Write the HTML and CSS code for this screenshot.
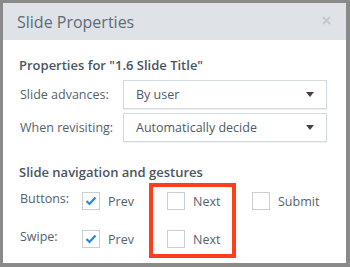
FILE: index.html
```html
<!DOCTYPE html>
<html>
<head>
<meta charset="utf-8">
<link rel="stylesheet" href="styles.css">
</head>
<body>
<div class="dialog">
  <div class="header">
    <span class="title">Slide Properties</span>
    <svg class="close" width="9" height="9" viewBox="0 0 9 9"><path d="M1 1L8 8M8 1L1 8" stroke="#c5c9cd" stroke-width="2"/></svg>
  </div>
  <div class="body">
    <div class="heading">Properties for "1.6 Slide Title"</div>
    <div class="form">
      <span class="label">Slide advances:</span>
      <div class="select"><span>By user</span><span class="arrow"></span></div>
      <span class="label">When revisiting:</span>
      <div class="select"><span>Automatically decide</span><span class="arrow"></span></div>
    </div>
    <div class="heading heading2">Slide navigation and gestures</div>
    <div class="nav">
      <span class="label">Buttons:</span>
      <label class="opt"><span class="box checked"><svg width="12" height="10" viewBox="0 0 12 10"><path d="M1.5 5L4.5 8L10.5 1.5" fill="none" stroke="#2a8ad6" stroke-width="2.2"/></svg></span>Prev</label>
      <label class="opt"><span class="box"></span>Next</label>
      <label class="opt"><span class="box"></span>Submit</label>
      <span class="label">Swipe:</span>
      <label class="opt"><span class="box checked"><svg width="12" height="10" viewBox="0 0 12 10"><path d="M1.5 5L4.5 8L10.5 1.5" fill="none" stroke="#2a8ad6" stroke-width="2.2"/></svg></span>Prev</label>
      <label class="opt"><span class="box"></span>Next</label>
      <span></span>
      <div class="highlight"></div>
    </div>
  </div>
</div>
</body>
</html>
```
FILE: styles.css
```css
html, body {
  margin: 0;
  padding: 0;
}
body {
  background: #8a8a8a;
  width: 350px;
  height: 267px;
  overflow: hidden;
  font-family: "Open Sans", "Noto Sans", sans-serif;
  color: #4f5a66;
}
.dialog {
  margin: 3px 4px 0 3px;
  height: 260px;
  background: #fff;
  display: flex;
  flex-direction: column;
}
.header {
  height: 37px;
  background: #dfe3e7;
  display: flex;
  align-items: center;
  justify-content: space-between;
  padding: 0 15px 0 14px;
}
.title {
  font-size: 16px;
  color: #5d6b79;
}
.close {
  margin-top: -2px;
}
.body {
  padding: 0 16px 0 16px;
}
.heading {
  margin-top: 16px;
  font-size: 13px;
  line-height: 18px;
  font-weight: 600;
  color: #4a5562;
}
.heading2 {
  margin-top: 21px;
}
.form {
  margin-top: 6px;
  display: grid;
  grid-template-columns: 104px 204px;
  row-gap: 4px;
  align-items: center;
}
.label {
  font-size: 12.5px;
  color: #56616d;
  padding-left: 1px;
}
.select {
  height: 29px;
  box-sizing: border-box;
  border: 1px solid #d5dadf;
  box-shadow: 0 1px 1px rgba(0,0,0,0.06);
  display: flex;
  align-items: center;
  justify-content: space-between;
  padding: 0 12px 0 12px;
  font-size: 12.5px;
  color: #4f5a66;
}
.arrow {
  width: 0;
  height: 0;
  border-left: 4px solid transparent;
  border-right: 4px solid transparent;
  border-top: 5px solid #444;
}
.nav {
  position: relative;
  margin-top: 11px;
  display: grid;
  grid-template-columns: 63px 85px 85px 85px;
  grid-auto-rows: 18px;
  row-gap: 20px;
  align-items: center;
}
.nav .label {
  margin-top: -5px;
}
.opt {
  display: flex;
  align-items: center;
  gap: 8px;
  font-size: 12.5px;
  color: #56616d;
}
.box {
  width: 18px;
  height: 18px;
  box-sizing: border-box;
  border: 1px solid #c9cfd5;
  display: flex;
  align-items: center;
  justify-content: center;
}
.highlight {
  position: absolute;
  left: 130px;
  top: -9px;
  width: 87px;
  height: 75px;
  box-sizing: border-box;
  border: 4px solid #ff3f1c;
}
```
